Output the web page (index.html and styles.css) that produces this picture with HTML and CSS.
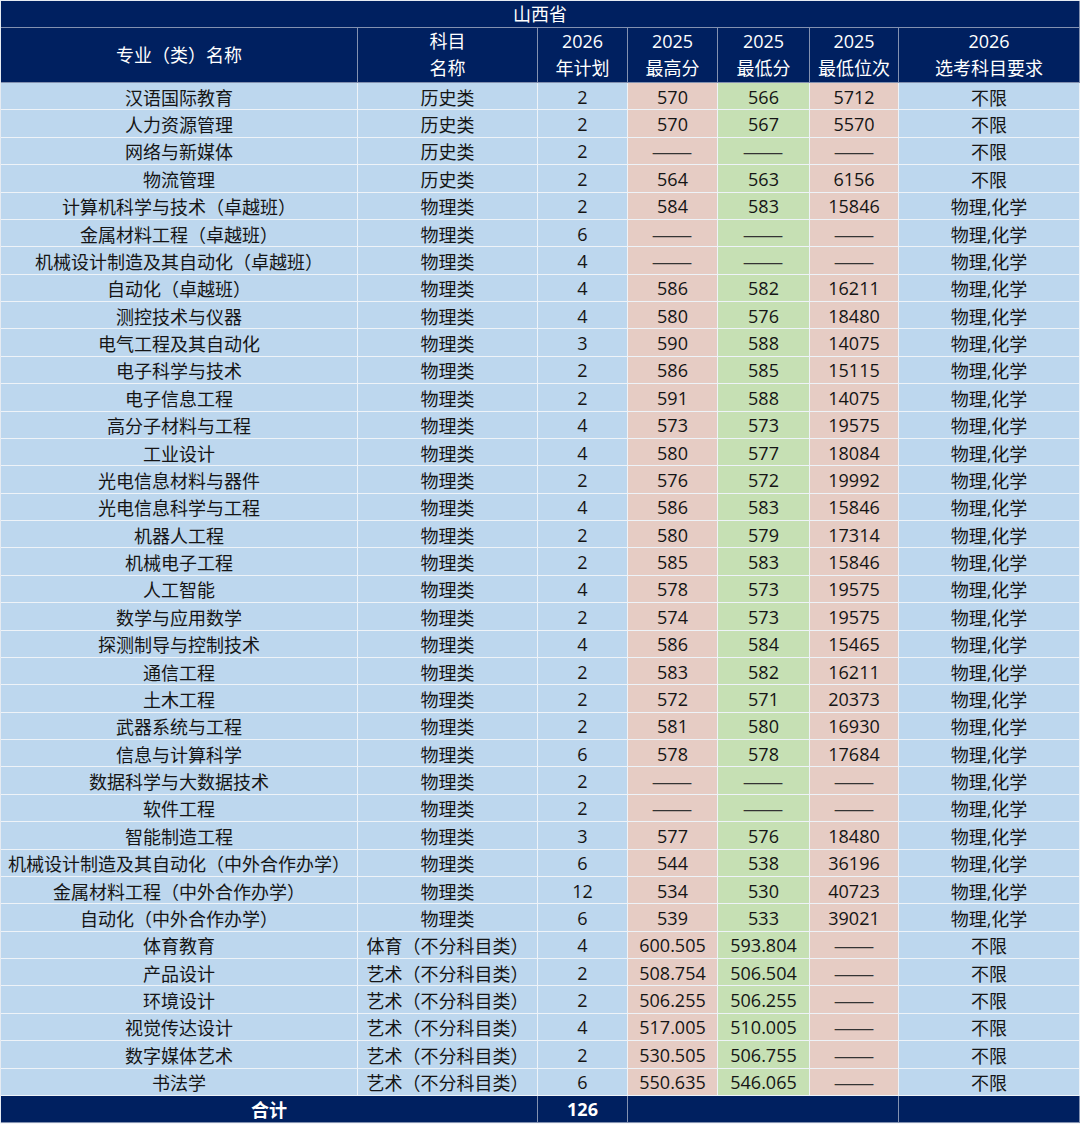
FILE: index.html
```html
<!DOCTYPE html>
<html lang="zh-CN">
<head>
<meta charset="utf-8">
<title>山西省</title>
<link rel="stylesheet" href="styles.css">
</head>
<body>
<div class="sheet">
  <div class="title-row">山西省</div>
  <div class="row head">
    <div class="cell">专业（类）名称</div>
    <div class="cell">科目<br>名称</div>
    <div class="cell">2026<br>年计划</div>
    <div class="cell">2025<br>最高分</div>
    <div class="cell">2025<br>最低分</div>
    <div class="cell">2025<br>最低位次</div>
    <div class="cell">2026<br>选考科目要求</div>
  </div>
  <div class="body">
    <div class="row"><div class="cell">汉语国际教育</div><div class="cell">历史类</div><div class="cell">2</div><div class="cell hi">570</div><div class="cell lo">566</div><div class="cell hi">5712</div><div class="cell">不限</div></div>
    <div class="row"><div class="cell">人力资源管理</div><div class="cell">历史类</div><div class="cell">2</div><div class="cell hi">570</div><div class="cell lo">567</div><div class="cell hi">5570</div><div class="cell">不限</div></div>
    <div class="row"><div class="cell">网络与新媒体</div><div class="cell">历史类</div><div class="cell">2</div><div class="cell hi"><span class="na">——</span></div><div class="cell lo"><span class="na">——</span></div><div class="cell hi"><span class="na">——</span></div><div class="cell">不限</div></div>
    <div class="row"><div class="cell">物流管理</div><div class="cell">历史类</div><div class="cell">2</div><div class="cell hi">564</div><div class="cell lo">563</div><div class="cell hi">6156</div><div class="cell">不限</div></div>
    <div class="row"><div class="cell">计算机科学与技术（卓越班）</div><div class="cell">物理类</div><div class="cell">2</div><div class="cell hi">584</div><div class="cell lo">583</div><div class="cell hi">15846</div><div class="cell">物理,化学</div></div>
    <div class="row"><div class="cell">金属材料工程（卓越班）</div><div class="cell">物理类</div><div class="cell">6</div><div class="cell hi"><span class="na">——</span></div><div class="cell lo"><span class="na">——</span></div><div class="cell hi"><span class="na">——</span></div><div class="cell">物理,化学</div></div>
    <div class="row"><div class="cell">机械设计制造及其自动化（卓越班）</div><div class="cell">物理类</div><div class="cell">4</div><div class="cell hi"><span class="na">——</span></div><div class="cell lo"><span class="na">——</span></div><div class="cell hi"><span class="na">——</span></div><div class="cell">物理,化学</div></div>
    <div class="row"><div class="cell">自动化（卓越班）</div><div class="cell">物理类</div><div class="cell">4</div><div class="cell hi">586</div><div class="cell lo">582</div><div class="cell hi">16211</div><div class="cell">物理,化学</div></div>
    <div class="row"><div class="cell">测控技术与仪器</div><div class="cell">物理类</div><div class="cell">4</div><div class="cell hi">580</div><div class="cell lo">576</div><div class="cell hi">18480</div><div class="cell">物理,化学</div></div>
    <div class="row"><div class="cell">电气工程及其自动化</div><div class="cell">物理类</div><div class="cell">3</div><div class="cell hi">590</div><div class="cell lo">588</div><div class="cell hi">14075</div><div class="cell">物理,化学</div></div>
    <div class="row"><div class="cell">电子科学与技术</div><div class="cell">物理类</div><div class="cell">2</div><div class="cell hi">586</div><div class="cell lo">585</div><div class="cell hi">15115</div><div class="cell">物理,化学</div></div>
    <div class="row"><div class="cell">电子信息工程</div><div class="cell">物理类</div><div class="cell">2</div><div class="cell hi">591</div><div class="cell lo">588</div><div class="cell hi">14075</div><div class="cell">物理,化学</div></div>
    <div class="row"><div class="cell">高分子材料与工程</div><div class="cell">物理类</div><div class="cell">4</div><div class="cell hi">573</div><div class="cell lo">573</div><div class="cell hi">19575</div><div class="cell">物理,化学</div></div>
    <div class="row"><div class="cell">工业设计</div><div class="cell">物理类</div><div class="cell">4</div><div class="cell hi">580</div><div class="cell lo">577</div><div class="cell hi">18084</div><div class="cell">物理,化学</div></div>
    <div class="row"><div class="cell">光电信息材料与器件</div><div class="cell">物理类</div><div class="cell">2</div><div class="cell hi">576</div><div class="cell lo">572</div><div class="cell hi">19992</div><div class="cell">物理,化学</div></div>
    <div class="row"><div class="cell">光电信息科学与工程</div><div class="cell">物理类</div><div class="cell">4</div><div class="cell hi">586</div><div class="cell lo">583</div><div class="cell hi">15846</div><div class="cell">物理,化学</div></div>
    <div class="row"><div class="cell">机器人工程</div><div class="cell">物理类</div><div class="cell">2</div><div class="cell hi">580</div><div class="cell lo">579</div><div class="cell hi">17314</div><div class="cell">物理,化学</div></div>
    <div class="row"><div class="cell">机械电子工程</div><div class="cell">物理类</div><div class="cell">2</div><div class="cell hi">585</div><div class="cell lo">583</div><div class="cell hi">15846</div><div class="cell">物理,化学</div></div>
    <div class="row"><div class="cell">人工智能</div><div class="cell">物理类</div><div class="cell">4</div><div class="cell hi">578</div><div class="cell lo">573</div><div class="cell hi">19575</div><div class="cell">物理,化学</div></div>
    <div class="row"><div class="cell">数学与应用数学</div><div class="cell">物理类</div><div class="cell">2</div><div class="cell hi">574</div><div class="cell lo">573</div><div class="cell hi">19575</div><div class="cell">物理,化学</div></div>
    <div class="row"><div class="cell">探测制导与控制技术</div><div class="cell">物理类</div><div class="cell">4</div><div class="cell hi">586</div><div class="cell lo">584</div><div class="cell hi">15465</div><div class="cell">物理,化学</div></div>
    <div class="row"><div class="cell">通信工程</div><div class="cell">物理类</div><div class="cell">2</div><div class="cell hi">583</div><div class="cell lo">582</div><div class="cell hi">16211</div><div class="cell">物理,化学</div></div>
    <div class="row"><div class="cell">土木工程</div><div class="cell">物理类</div><div class="cell">2</div><div class="cell hi">572</div><div class="cell lo">571</div><div class="cell hi">20373</div><div class="cell">物理,化学</div></div>
    <div class="row"><div class="cell">武器系统与工程</div><div class="cell">物理类</div><div class="cell">2</div><div class="cell hi">581</div><div class="cell lo">580</div><div class="cell hi">16930</div><div class="cell">物理,化学</div></div>
    <div class="row"><div class="cell">信息与计算科学</div><div class="cell">物理类</div><div class="cell">6</div><div class="cell hi">578</div><div class="cell lo">578</div><div class="cell hi">17684</div><div class="cell">物理,化学</div></div>
    <div class="row"><div class="cell">数据科学与大数据技术</div><div class="cell">物理类</div><div class="cell">2</div><div class="cell hi"><span class="na">——</span></div><div class="cell lo"><span class="na">——</span></div><div class="cell hi"><span class="na">——</span></div><div class="cell">物理,化学</div></div>
    <div class="row"><div class="cell">软件工程</div><div class="cell">物理类</div><div class="cell">2</div><div class="cell hi"><span class="na">——</span></div><div class="cell lo"><span class="na">——</span></div><div class="cell hi"><span class="na">——</span></div><div class="cell">物理,化学</div></div>
    <div class="row"><div class="cell">智能制造工程</div><div class="cell">物理类</div><div class="cell">3</div><div class="cell hi">577</div><div class="cell lo">576</div><div class="cell hi">18480</div><div class="cell">物理,化学</div></div>
    <div class="row"><div class="cell">机械设计制造及其自动化（中外合作办学）</div><div class="cell">物理类</div><div class="cell">6</div><div class="cell hi">544</div><div class="cell lo">538</div><div class="cell hi">36196</div><div class="cell">物理,化学</div></div>
    <div class="row"><div class="cell">金属材料工程（中外合作办学）</div><div class="cell">物理类</div><div class="cell">12</div><div class="cell hi">534</div><div class="cell lo">530</div><div class="cell hi">40723</div><div class="cell">物理,化学</div></div>
    <div class="row"><div class="cell">自动化（中外合作办学）</div><div class="cell">物理类</div><div class="cell">6</div><div class="cell hi">539</div><div class="cell lo">533</div><div class="cell hi">39021</div><div class="cell">物理,化学</div></div>
    <div class="row"><div class="cell">体育教育</div><div class="cell">体育（不分科目类）</div><div class="cell">4</div><div class="cell hi">600.505</div><div class="cell lo">593.804</div><div class="cell hi"><span class="na">——</span></div><div class="cell">不限</div></div>
    <div class="row"><div class="cell">产品设计</div><div class="cell">艺术（不分科目类）</div><div class="cell">2</div><div class="cell hi">508.754</div><div class="cell lo">506.504</div><div class="cell hi"><span class="na">——</span></div><div class="cell">不限</div></div>
    <div class="row"><div class="cell">环境设计</div><div class="cell">艺术（不分科目类）</div><div class="cell">2</div><div class="cell hi">506.255</div><div class="cell lo">506.255</div><div class="cell hi"><span class="na">——</span></div><div class="cell">不限</div></div>
    <div class="row"><div class="cell">视觉传达设计</div><div class="cell">艺术（不分科目类）</div><div class="cell">4</div><div class="cell hi">517.005</div><div class="cell lo">510.005</div><div class="cell hi"><span class="na">——</span></div><div class="cell">不限</div></div>
    <div class="row"><div class="cell">数字媒体艺术</div><div class="cell">艺术（不分科目类）</div><div class="cell">2</div><div class="cell hi">530.505</div><div class="cell lo">506.755</div><div class="cell hi"><span class="na">——</span></div><div class="cell">不限</div></div>
    <div class="row"><div class="cell">书法学</div><div class="cell">艺术（不分科目类）</div><div class="cell">6</div><div class="cell hi">550.635</div><div class="cell lo">546.065</div><div class="cell hi"><span class="na">——</span></div><div class="cell">不限</div></div>
  </div>
  <div class="row total">
    <div class="cell span2">合计</div>
    <div class="cell">126</div>
    <div class="cell span3"></div>
    <div class="cell"></div>
  </div>
</div>
</body>
</html>
```

FILE: styles.css
```css
html, body {
  margin: 0;
  padding: 0;
  background: #f4f6f9;
}

.sheet {
  width: 1080px;
  display: flex;
  flex-direction: column;
  font-family: "Open Sans", "Noto Sans CJK SC", sans-serif;
  font-size: 18px;
  color: #151515;
  text-align: center;
  border-left: 1px solid #e6ebf2;
  border-top: 1px solid #e6ebf2;
  box-sizing: border-box;
}

.title-row {
  height: 26px;
  line-height: 26px;
  background: #002060;
  color: #ffffff;
  border-bottom: 1px solid #8391b0;
  border-right: 1px solid #8391b0;
  box-sizing: content-box;
}

.row {
  display: grid;
  grid-template-columns: 357px 180px 90px 90px 92px 89px 181px;
}

.cell {
  display: flex;
  align-items: center;
  justify-content: center;
  white-space: nowrap;
  overflow: hidden;
  box-sizing: border-box;
  border-right: 1px solid #eef3f8;
  border-bottom: 1px solid #eef3f8;
}

.head {
  height: 55px;
}

.head .cell {
  background: #002060;
  color: #ffffff;
  line-height: 27px;
  border-color: #8391b0;
}

.body {
  display: flex;
  flex-direction: column;
}

.body .row {
  height: 27.38px;
}

.body .cell {
  background: #bdd7ee;
  padding-top: 1px;
}

.body .cell.hi {
  background: #e6ccc4;
}

.body .cell.lo {
  background: #c6e0b4;
}

.na {
  display: inline-block;
  font-family: "Noto Sans CJK SC", sans-serif;
  transform: scaleX(1.36);
  color: #333333;
}

.total {
  height: 27px;
}

.total .cell {
  background: #002060;
  color: #ffffff;
  font-weight: bold;
  border-color: #8391b0;
  padding-top: 1px;
}

.total .span2 {
  grid-column: span 2;
}

.total .span3 {
  grid-column: span 3;
}
```
